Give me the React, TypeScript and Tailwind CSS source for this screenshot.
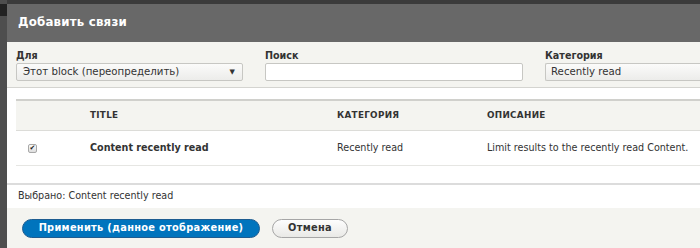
export default function App() {
  const font = "font-['DejaVu_Sans',sans-serif]";
  return (
    <div className={`w-[700px] h-[248px] overflow-hidden bg-[#3b3b3b] flex ${font}`}>
      {/* page behind the overlay */}
      <div className="w-[7px] shrink-0 bg-[#4e4e4e] flex flex-col pt-[4px]">
        <div className="h-[12px] bg-[#222]" />
      </div>

      <div className="flex-1 mt-[4px] flex flex-col bg-white">
        <div className="h-[38px] bg-[#686868] flex items-center px-[11px]">
          <h1 className="text-white font-bold text-[11.8px] tracking-[0.2px]">Добавить связи</h1>
        </div>

        <div className="bg-[#f4f4f0] h-[46px] border-b border-[#d4d4d0] flex gap-[22px] pl-[9px] pt-[6px]">
          <div className="flex flex-col w-[227px] shrink-0">
            <label className="text-[9.6px] font-bold text-[#333] h-[15px] leading-[15px]">Для</label>
            <div className="h-[18px] border border-[#c7c7c3] rounded-[2px] bg-gradient-to-b from-[#fbfbfa] to-[#ececea] flex items-center justify-between pl-[6px] pr-[7px]">
              <span className="text-[10.2px] text-[#333]">Этот block (переопределить)</span>
              <span className="text-[7px] text-[#333]">▼</span>
            </div>
          </div>
          <div className="flex flex-col w-[258px] shrink-0">
            <label className="text-[9.6px] font-bold text-[#333] h-[15px] leading-[15px]">Поиск</label>
            <div className="h-[18px] border border-[#c7c7c3] rounded-[2px] bg-white" />
          </div>
          <div className="flex flex-col flex-1">
            <label className="text-[9.6px] font-bold text-[#333] h-[15px] leading-[15px]">Категория</label>
            <div className="h-[18px] border border-r-0 border-[#c7c7c3] rounded-l-[2px] bg-gradient-to-b from-[#fbfbfa] to-[#ececea] flex items-center pl-[5px]">
              <span className="text-[10.2px] text-[#333]">Recently read</span>
            </div>
          </div>
        </div>

        <div className="bg-white h-[97px] pl-[9px] pt-[11px] border-b-2 border-[#dcdcdc]">
          <div className="border-t-2 border-[#d0d0cc]">
            <div className="h-[30px] bg-[#f4f4f0] border-b border-[#dcdcd8] grid grid-cols-[74px_247px_150px_1fr] items-center text-[8.8px] font-bold text-[#333] uppercase tracking-[0.3px]">
              <div />
              <div>Title</div>
              <div>Категория</div>
              <div>Описание</div>
            </div>
            <div className="h-[35px] border-b border-[#e6e6e3] grid grid-cols-[74px_247px_150px_1fr] items-center text-[9.6px] text-[#333]">
              <div className="pl-[12px] flex items-center">
                <span className="w-[9px] h-[9px] border border-[#a8a8a8] rounded-[2px] bg-gradient-to-b from-[#fafafa] to-[#dedede] flex items-center justify-center text-[7px] leading-none text-[#222]">✔</span>
              </div>
              <div className="font-bold">Content recently read</div>
              <div>Recently read</div>
              <div>Limit results to the recently read Content.</div>
            </div>
          </div>
        </div>

        <div className="bg-white h-[23px] flex items-center px-[11px] text-[9.6px] text-[#333]">
          Выбрано: Content recently read
        </div>

        <div className="bg-[#f4f4f0] flex-1 flex items-start gap-[12px] px-[15px] pt-[11px]">
          <button className="h-[19px] w-[238px] rounded-full bg-[#0074bd] border border-[#1e5c90] text-white font-bold text-[9.8px] tracking-[0.3px]">
            Применить (данное отображение)
          </button>
          <button className="h-[19px] w-[76px] rounded-full bg-gradient-to-b from-[#fdfdfd] to-[#e9e9e6] border border-[#a6a6a6] text-[#333] font-bold text-[9.8px] tracking-[0.3px]">
            Отмена
          </button>
        </div>
      </div>
    </div>
  );
}
